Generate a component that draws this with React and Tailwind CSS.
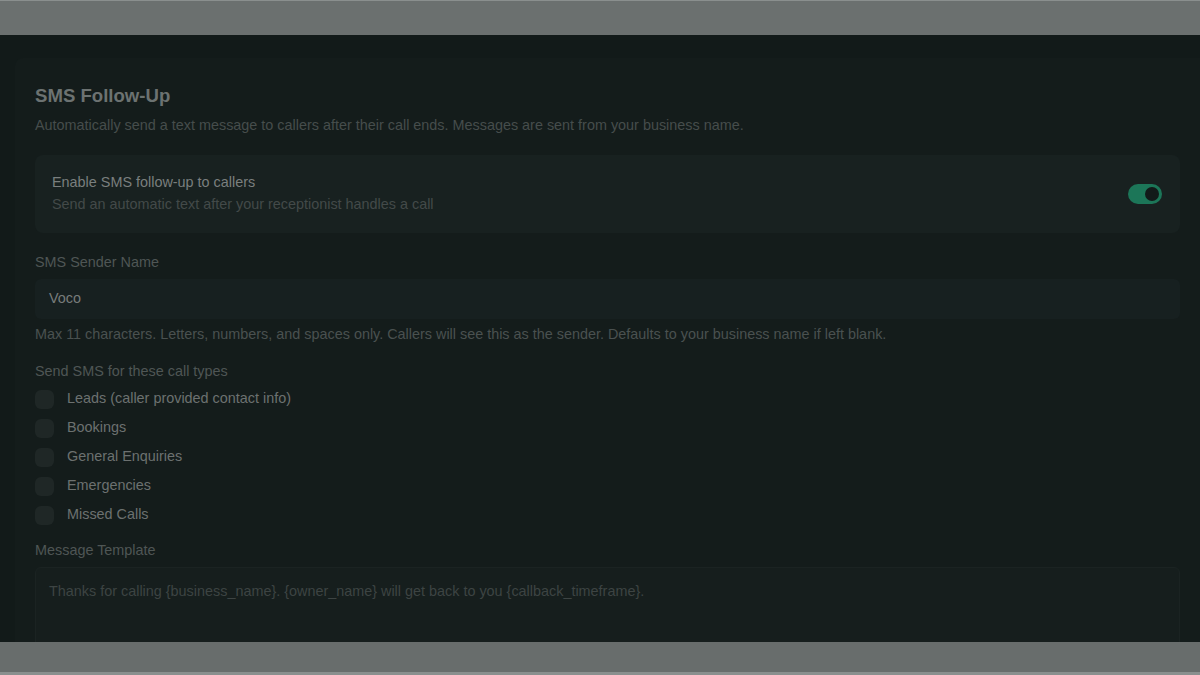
import { useState } from "react";

const callTypes = [
  "Leads (caller provided contact info)",
  "Bookings",
  "General Enquiries",
  "Emergencies",
  "Missed Calls",
];

export default function App() {
  const [enabled, setEnabled] = useState(true);
  const [checked, setChecked] = useState({});

  return (
    <div className="flex h-[675px] w-[1200px] flex-col overflow-hidden bg-[#121a19] font-['Liberation_Sans',Arial,sans-serif]">
      <div className="h-[35px] shrink-0 border-t border-[#8a8f8e] bg-[#6b706f]" />

      <div className="min-h-0 flex-1 overflow-hidden pl-[15px] pt-[23px]">
        <section className="h-full rounded-tl-lg bg-[#141c1b] px-5 pt-[27px]">
          <h1 className="text-[18.6px] font-bold leading-[22px] text-[#6c7271]">SMS Follow-Up</h1>
          <p className="mt-[10px] text-[14.4px] leading-[17px] text-[#464d4c]">
            Automatically send a text message to callers after their call ends. Messages are sent from your business name.
          </p>

          <div className="mt-[21px] flex items-center justify-between rounded-lg bg-[#182120] pb-[20px] pl-[17px] pr-[18px] pt-[19px]">
            <div>
              <p className="text-[14.4px] leading-[17px] text-[#7a7f7e]">Enable SMS follow-up to callers</p>
              <p className="mt-[5px] text-[14.4px] leading-[17px] text-[#434a49]">Send an automatic text after your receptionist handles a call</p>
            </div>
            <button
              onClick={() => setEnabled((v) => !v)}
              className={`flex h-[20px] w-[34px] items-center rounded-full px-[3px] ${enabled ? "justify-end bg-[#1c7658]" : "justify-start bg-[#2a3231]"}`}
            >
              <span className="h-[14px] w-[14px] rounded-full bg-[#121a19]" />
            </button>
          </div>

          <label className="mt-[21px] block text-[14.4px] leading-[17px] text-[#4f5655]">SMS Sender Name</label>
          <div className="mt-[8px] flex h-[40px] items-center rounded-md bg-[#172020] px-[14px] text-[14.4px] text-[#777c7b]">
            Voco
          </div>
          <p className="mt-[7px] text-[14.4px] leading-[17px] text-[#4a5150]">
            Max 11 characters. Letters, numbers, and spaces only. Callers will see this as the sender. Defaults to your business name if left blank.
          </p>

          <p className="mt-[20px] text-[14.4px] leading-[17px] text-[#4f5655]">Send SMS for these call types</p>
          <div className="mt-[9px] flex flex-col gap-[9px]">
            {callTypes.map((type) => (
              <label key={type} className="flex h-[20px] cursor-pointer items-center gap-[13px]">
                <span
                  onClick={() => setChecked((c) => ({ ...c, [type]: !c[type] }))}
                  className={`h-[19px] w-[19px] rounded-md ${checked[type] ? "bg-[#1c7658]" : "bg-[#1f2726]"}`}
                />
                <span className="text-[14.4px] text-[#6c7170]">{type}</span>
              </label>
            ))}
          </div>

          <label className="mt-[17px] block text-[14.4px] leading-[17px] text-[#4f5655]">Message Template</label>
          <div className="mt-[8px] h-[120px] rounded-md border border-[#1b2322] bg-[#161e1d] px-[13px] pt-[15px] text-[14.4px] leading-[17px] text-[#3d4443]">
            Thanks for calling {"{business_name}"}. {"{owner_name}"} will get back to you {"{callback_timeframe}"}.
          </div>
        </section>
      </div>

      <div className="h-[33px] shrink-0 border-b-[3px] border-[#8a8f8e] bg-[#686d6c]" />
    </div>
  );
}
